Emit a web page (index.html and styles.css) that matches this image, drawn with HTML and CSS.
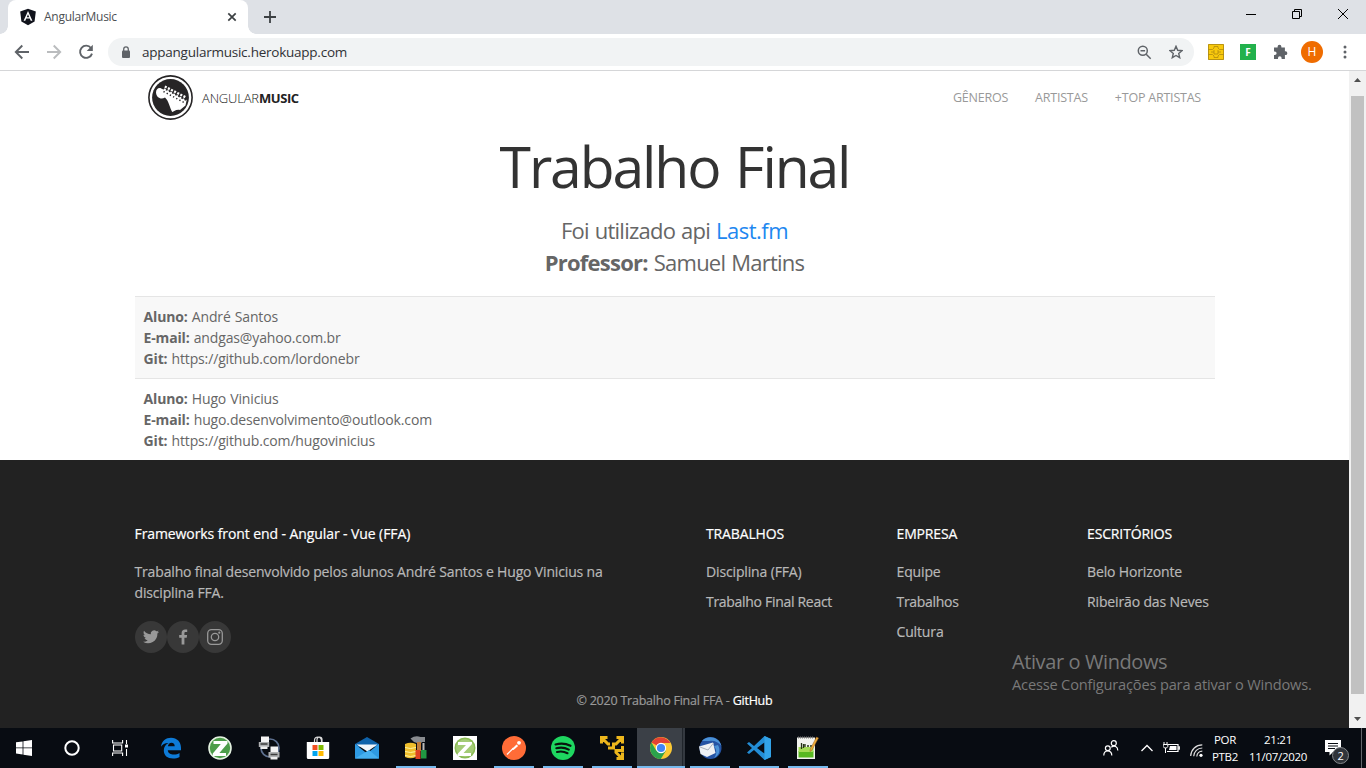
FILE: index.html
```html
<!DOCTYPE html>
<html lang="pt-BR">
<head>
<meta charset="utf-8">
<title>AngularMusic</title>
<link rel="stylesheet" href="styles.css">
</head>
<body>
<div class="screen">
  <div class="tabstrip">
    <div class="tab">
      <svg class="tab-icon" width="18" height="18" viewBox="0 0 18 18"><path d="M9 .8 16.8 3.5 15.6 13.6 9 17.2 2.4 13.6 1.2 3.5z" fill="#11131c"/><path d="M9 3 4.6 12.8h1.7l.9-2.2h3.6l.9 2.2h1.7zM9 6.2l1.2 3H7.8z" fill="#fff"/></svg>
      <span class="tab-title">AngularMusic</span>
      <svg class="tab-close" width="10" height="10" viewBox="0 0 10 10"><path d="M1.300 1.300l7.400 7.400M8.700 1.300l-7.400 7.400" stroke="#3c4043" stroke-width="1.700"/></svg>
    </div>
    <svg class="new-tab" width="12" height="12" viewBox="0 0 12 12"><path d="M6 0v12M0 6h12" stroke="#3c4043" stroke-width="1.800"/></svg>
    <div class="window-buttons">
      <svg width="10" height="10" viewBox="0 0 10 10"><path d="M0 5.500h10" stroke="#000"/></svg>
      <svg width="10" height="10" viewBox="0 0 10 10"><path d="M.5 2.500h7v7h-7zM2.500 2.500v-2h7v7h-2" fill="none" stroke="#000"/></svg>
      <svg width="10" height="10" viewBox="0 0 10 10"><path d="M0 0l10 10M10 0L0 10" stroke="#000"/></svg>
    </div>
  </div>

  <div class="toolbar">
    <div class="nav-buttons">
      <svg width="16" height="16" viewBox="0 0 16 16"><path d="M15 8H2M8.300 1.500 1.800 8l6.500 6.500" fill="none" stroke="#5f6368" stroke-width="1.900"/></svg>
      <svg width="16" height="16" viewBox="0 0 16 16"><path d="M1 8h13M7.700 1.500 14.200 8l-6.500 6.500" fill="none" stroke="#babcbe" stroke-width="1.900"/></svg>
      <svg width="16" height="16" viewBox="0 0 16 16"><path d="M13 4A6.100 6.100 0 1 0 14 9.600" fill="none" stroke="#5f6368" stroke-width="1.900"/><path d="M14.800 .8v6.100H8.700z" fill="#5f6368"/></svg>
    </div>
    <div class="omnibox">
      <svg width="10" height="13" viewBox="0 0 10 13"><rect x="1" y="4.500" width="8" height="7.500" rx="1" fill="#5f6368"/><path d="M2.700 5V3.200a2.300 2.300 0 0 1 4.600 0V5" fill="none" stroke="#5f6368" stroke-width="1.300"/></svg>
      <span class="url">appangularmusic.herokuapp.com</span>
      <svg class="zoom-icon" width="15" height="15" viewBox="0 0 15 15"><circle cx="5.800" cy="5.800" r="4.500" fill="none" stroke="#5f6368" stroke-width="1.500"/><path d="M3.500 5.800h4.600M9.200 9.200l4.500 4.500" stroke="#5f6368" stroke-width="1.500"/></svg>
      <svg width="14" height="14" viewBox="0 0 14 14"><path d="M7 1.300l1.700 4 4.300.4-3.300 2.800 1 4.200L7 10.500l-3.700 2.200 1-4.200L1 5.700l4.300-.4z" fill="none" stroke="#5f6368" stroke-width="1.400"/></svg>
    </div>
    <div class="extensions">
      <svg width="16" height="16" viewBox="0 0 16 16"><rect width="16" height="16" rx="1" fill="#f8c90c"/><path d="M.5.5h15v15H.5z" fill="none" stroke="#a98612" stroke-width=".8"/><path d="M0 5.500h4.500l1.500-1.500V2.500h4V4l1.500 1.500H16M0 10.500h4.500L6 12v1.500h4V12l1.500-1.500H16M6 6v4h4V6M3 8h3M10 8h3" fill="none" stroke="#b08c10" stroke-width=".8"/></svg>
      <span class="ext-f">F</span>
      <svg width="16" height="16" viewBox="0 0 16 16"><path d="M2 3.600h3.600v-.9a1.900 1.900 0 0 1 3.800 0v.9h3.500v3.700h.6a1.800 1.800 0 0 1 0 3.700h-.6v4H9.600v-.9a1.800 1.800 0 0 0-3.600 0v.9H2V11h.8a1.800 1.800 0 0 0 0-3.600H2z" fill="#5f6368"/></svg>
      <span class="avatar">H</span>
      <svg class="kebab" width="4" height="14" viewBox="0 0 4 14"><g fill="#5f6368"><circle cx="2" cy="2" r="1.500"/><circle cx="2" cy="7" r="1.500"/><circle cx="2" cy="12" r="1.500"/></g></svg>
    </div>
  </div>

  <div class="viewport">
    <div class="page">
      <nav class="navbar">
        <svg width="45" height="45" viewBox="0 0 45 45"><circle cx="22.500" cy="22.500" r="21.600" fill="#fff" stroke="#272526" stroke-width="1.600"/><circle cx="22.500" cy="22.500" r="18.400" fill="#272526"/><path d="M8 17.500C8 14 10.600 12.200 13.200 13.400 15.400 14.400 17 15.200 19 15.700L38.400 26.200 37.500 30.500 32 34.900C28 34 26 36.500 24.200 37 21.800 33 20.800 26 17 22.600 12.800 25 8.300 22.500 8 17.500z" fill="#fff"/><path d="M16 14.200 38.300 26" stroke="#fff" stroke-width="2" stroke-dasharray="1.800 1.700"/><path d="M16.800 11.500 38 22.500" stroke="#fff" stroke-width="2.400" stroke-dasharray="2.100 1.400"/><path d="M15.500 16.500 37 28" stroke="#272526" stroke-width="1.500" stroke-dasharray="1.300 2.300"/></svg>
        <span class="brand"><span class="brand-light">ANGULAR</span><b>MUSIC</b></span>
        <div class="menu"><a>GÊNEROS</a><a>ARTISTAS</a><a>+TOP ARTISTAS</a></div>
      </nav>
      <main class="container">
        <h1>Trabalho Final</h1>
        <p class="lead">Foi utilizado api <a>Last.fm</a><br><b>Professor:</b> Samuel Martins</p>
        <div class="student shaded"><b>Aluno:</b> André Santos<br><b>E-mail:</b> andgas@yahoo.com.br<br><b>Git:</b> https://github.com/lordonebr</div>
        <div class="student"><b>Aluno:</b> Hugo Vinicius<br><b>E-mail:</b> hugo.desenvolvimento@outlook.com<br><b>Git:</b> https://github.com/hugovinicius</div>
      </main>
      <footer class="footer">
        <div class="columns">
          <section>
            <h2 class="wide">Frameworks front end - Angular - Vue (FFA)</h2>
            <p class="about">Trabalho final desenvolvido pelos alunos André Santos e Hugo Vinicius na disciplina FFA.</p>
            <div class="social">
              <span><svg width="20" height="20" viewBox="0 0 20 20"><path d="M18 4.800c-.6.300-1.200.4-1.900.5.700-.4 1.200-1 1.400-1.800-.6.400-1.300.6-2.100.8A3.300 3.300 0 0 0 9.800 7.300C7.100 7.200 4.600 5.900 3 3.800c-.9 1.500-.4 3.400 1 4.400-.5 0-1-.2-1.500-.4 0 1.600 1.100 2.900 2.600 3.200-.5.100-1 .2-1.500.1.400 1.300 1.600 2.200 3.100 2.300A6.600 6.600 0 0 1 2 14.700a9.300 9.300 0 0 0 14.400-8.200c.6-.5 1.200-1.100 1.600-1.700z"/></svg></span>
              <span><svg width="20" height="20" viewBox="0 0 20 20"><path d="M8.600 17.500V10.700H6.200V8h2.400V6c0-2.300 1.400-3.600 3.500-3.600 1 0 1.900.1 2.100.1V5h-1.400c-1.100 0-1.400.5-1.400 1.300V8h2.700l-.4 2.700h-2.300v6.800z"/></svg></span>
              <span><svg width="20" height="20" viewBox="0 0 20 20"><rect x="2.700" y="2.700" width="14.600" height="14.600" rx="3.800" fill="none" stroke="#999" stroke-width="1.300"/><circle cx="10" cy="10" r="3.700" fill="none" stroke="#999" stroke-width="1.300"/><circle cx="14.300" cy="5.700" r="1.100"/></svg></span>
            </div>
          </section>
          <section><h2>TRABALHOS</h2><a class="link">Disciplina (FFA)</a><a class="link tight">Trabalho Final React</a></section>
          <section><h2>EMPRESA</h2><a class="link">Equipe</a><a class="link tight">Trabalhos</a><a class="link">Cultura</a></section>
          <section><h2>ESCRITÓRIOS</h2><a class="link">Belo Horizonte</a><a class="link">Ribeirão das Neves</a></section>
        </div>
        <p class="copyright">© 2020 Trabalho Final FFA - <a>GitHub</a></p>
      </footer>
    </div>
    <div class="scrollbar">
      <svg width="17" height="17" viewBox="0 0 17 17"><path d="M5 11h7L8.500 7z" fill="#505050"/></svg>
      <div class="thumb"></div>
      <svg class="down" width="17" height="17" viewBox="0 0 17 17"><path d="M5 6h7L8.500 10z" fill="#505050"/></svg>
    </div>
  </div>

  <div class="taskbar">
    <div class="system">
      <span><svg width="16" height="16" viewBox="0 0 16 16"><path d="M0 2.300 6.600 1.400v6.100H0zM7.400 1.300 16 0v7.500H7.400zM0 8.300h6.600v6.200L0 13.600zM7.400 8.300H16V16l-8.600-1.300z" fill="#fff"/></svg></span>
      <span><svg width="16" height="16" viewBox="0 0 16 16"><circle cx="8" cy="8" r="6.700" fill="none" stroke="#fff" stroke-width="2"/></svg></span>
      <span><svg width="17" height="16" viewBox="0 0 17 16"><path d="M.6 0v3h10V0M.6 16v-3h10v3M1.500 5h8.200v6H1.500zM14.500 0v4M14.500 9v7" fill="none" stroke="#fff" stroke-width="1.100"/><path d="M13 4.500h3v3h-3z" fill="#fff"/></svg></span>
    </div>
    <div class="apps">
      <span><svg width="22" height="22" viewBox="0 0 22 22"><path d="M1 9.800C1.700 3.700 6 .8 11 .8c6 0 10 4.200 10 10v2.500H7.800c.2 3 3 4.300 6 4.300 2.300 0 4.200-.7 5.700-1.600V20c-1.900 1-4.200 1.600-6.500 1.600-5.500 0-9.200-3-9.200-8 0-3.400 1.800-6 4.800-7.500C4.800 6 2.500 7.700 1 9.800zM7.900 9.300h6.800c0-2.400-1.100-3.600-3.200-3.600-2 0-3.300 1.500-3.600 3.600z" fill="#0e7bd7"/></svg></span>
      <span><svg width="24" height="24" viewBox="0 0 24 24"><circle cx="12" cy="12" r="11" fill="#4c9d49" stroke="#e4f2e1" stroke-width="1.600"/><path d="M5.500 5h14v2.500L11.400 17H18v3H4.800v-2.500l8-9.500H5.500z" fill="#fff"/></svg></span>
      <span><svg width="22" height="24" viewBox="0 0 22 24"><circle cx="12" cy="12" r="9" fill="none" stroke="#5e7190" stroke-width="1.700"/><path d="M3 .5h8v6H3zM12.500 10.500H20v6h-7.500z" fill="#f4f4f4"/><path d="M.8 6h10.400v5H.8zM10.500 16h11v5.500h-11z" fill="#aeb0b2"/><path d="M2.500 8h7M12.500 18.400h7" stroke="#3c3c3c" stroke-width="1.500"/><path d="M2.500 10.500h7v2.500h-7zM12.500 21h7v2.500h-7z" fill="#eee"/></svg></span>
      <span><svg width="24" height="24" viewBox="0 0 24 24"><path d="M8.500 7V4.500a3.500 3.500 0 0 1 7 0V7M11 6V3.500a2.500 2.500 0 0 1 5 0V6" fill="none" stroke="#ddd" stroke-width="1.200"/><path d="M.8 6h22.400v15.500a1.500 1.500 0 0 1-1.500 1.500H2.300A1.500 1.500 0 0 1 .8 21.500z" fill="#fff"/><path d="M6.500 9h5v5h-5z" fill="#f25022"/><path d="M12.500 9h5v5h-5z" fill="#7fba00"/><path d="M6.500 15h5v5h-5z" fill="#00a4ef"/><path d="M12.500 15h5v5h-5z" fill="#ffb900"/></svg></span>
      <span><svg width="24" height="24" viewBox="0 0 24 24"><path d="M0 8 12 1l12 7v3H0z" fill="#0f63aa"/><path d="M0 8l12 9.500L24 8v14.500H0z" fill="#2e9ae2"/><path d="M1.500 8.500h21L12.500 15.500z" fill="#f1f6fa"/><path d="M0 22.500 14 14l10 8.500z" fill="#46b0f0"/></svg></span>
      <span class="open"><svg width="22" height="24" viewBox="0 0 22 24"><path d="M0 8q5.500-2.500 11 0v13q-5.500 2.500-11 0z" fill="#eebe2c"/><path d="M0 11.500q5.500 2 11 0M0 15.500q5.500 2 11 0M0 19.500q5.500 2 11 0" fill="none" stroke="#fff3a0"/><path d="M5.500 2.500q5-3.500 10-1.500H20v5h-3l-1 1.300-4-.4L9 6z" fill="#888b8f"/><path d="M12 6h4v9h-4z" fill="#bf7c3b"/><path d="M10.500 14h5v9h-5z" fill="#df4323"/><path d="M17.500 7h2v8h-2z" fill="#bbb"/><path d="M16 14h5.500v8.500H16z" fill="#209742"/></svg></span>
      <span><svg width="24" height="24" viewBox="0 0 24 24"><path d="M0 0h24v24H0z" fill="#fff"/><circle cx="12" cy="12" r="10.500" fill="#8aba54"/><circle cx="12" cy="12" r="9" fill="#a4cc76"/><path d="M5 6h14v2l-8.500 9H18v3H4.500v-2L13 9H5z" fill="#fff"/></svg></span>
      <span class="open"><svg width="24" height="24" viewBox="0 0 24 24"><circle cx="12" cy="12" r="12" fill="#ff6c37"/><path d="M5 18.500 11.500 12" stroke="#fff" stroke-width="1.200" fill="none"/><path d="M9.500 13.500l5-5 1.700 1.600-4.700 3.900z" fill="#fff"/><circle cx="17" cy="6.800" r="1.900" fill="#fff"/></svg></span>
      <span class="open"><svg width="24" height="24" viewBox="0 0 24 24"><circle cx="12" cy="12" r="12" fill="#1ed760"/><path d="M4.500 8.500c5-1.500 10.500-1 15 1.300M5.300 12.300c4.300-1.200 8.800-.7 12.500 1.300M6 16c3.700-.9 7.300-.5 10.500 1.200" fill="none" stroke="#08150d" stroke-width="2.100" stroke-linecap="round"/></svg></span>
      <span class="open"><svg width="24" height="24" viewBox="0 0 24 24"><g fill="none" stroke="#edb71c" stroke-width="3"><path d="M1.500 7.500v-6h6M2 2l6 6h2M16.500 1.500h6v6M22 2l-6 6h-2.500v4H8M22.500 10v4.500H16v2l6 6M16.500 22.500h6v-6"/></g></svg></span>
      <span class="open active"><svg width="22" height="22" viewBox="0 0 22 22"><circle cx="11" cy="11" r="11" fill="#fcc934"/><path d="M11 11 1.500 5.500A11 11 0 0 1 20.500 6H11z" fill="#e34133"/><path d="M1.500 5.500A11 11 0 0 0 10.800 22l5-8.200L11 11 6.300 13.700z" fill="#2ba24c"/><circle cx="11" cy="11" r="5.200" fill="#fff"/><circle cx="11" cy="11" r="4.100" fill="#4285f4"/></svg></span>
      <span class="open"><svg width="24" height="24" viewBox="0 0 24 24"><circle cx="12.500" cy="12" r="11" fill="#2453a3"/><path d="M4 5C9-1 21 0 23.500 10c-3-4-8-6-12-5z" fill="#4a91d6"/><path d="M20 9c3 5 1 11-4 13 3-4 3-8 0-12z" fill="#4a91d6"/><path d="M1 10.500 15 6.500l2.500 10.500L9 21l-6.500-3z" fill="#eef1f4"/><path d="M2 11l8 3 5.500-7" fill="none" stroke="#a6b0bb"/></svg></span>
      <span class="open"><svg width="24" height="24" viewBox="0 0 24 24"><path d="M17.500 0 24 3v18l-6.500 3L7 14l-5 4-2-1.500L5 12 0 7.500 2 6l5 4zM17.500 6.500 10 12l7.500 5.500z" fill="#238dd5" fill-rule="evenodd"/><path d="M17.500 0 24 3v18l-6.500 3z" fill="#32a3e8"/></svg></span>
      <span class="open"><svg width="23" height="24" viewBox="0 0 23 24"><path d="M1 1.500h18V23H1z" fill="#f2f3ee"/><path d="M2.500 15h15v6.500h-15z" fill="#58b921"/><path d="M2.500 11h15v5h-15z" fill="#a4dc55"/><path d="M2 1.500h16" stroke="#777" stroke-width="2" stroke-dasharray="1 1"/><path d="M5.500 7v6M7.500 8v4M9 8v3M11 10h2M14 10h2" stroke="#263616" stroke-width="1.300"/><path d="M20.500 1 22.500 2 16 14l-2 1.500.3-2.500z" fill="#efad3a" stroke="#986022" stroke-width=".5"/></svg></span>
    </div>
    <div class="tray">
      <svg class="people" width="16" height="16" viewBox="0 0 16 16"><g fill="none" stroke="#fff" stroke-width="1.200"><circle cx="4.800" cy="8.300" r="2.400"/><path d="M.8 15.500c0-6 8-6 8 0"/><circle cx="10.800" cy="3.200" r="2.500"/><path d="M8.300 7.300c3-2.700 6.500-.5 6.500 3.200"/></g></svg>
      <svg class="chevron" width="12" height="8" viewBox="0 0 12 8"><path d="M.5 7 6 1.500 11.500 7" fill="none" stroke="#fff" stroke-width="1.300"/></svg>
      <svg class="battery" width="17" height="12" viewBox="0 0 17 12"><path d="M5 2.500h10v7H4M16.300 4.300v3.400" fill="none" stroke="#fff" stroke-width="1.200"/><path d="M7 4h6.500v4H6z" fill="#fff"/><path d="M1 0v2M4 0v2M.2 2.500h4.600v2L3.500 6h-2L.2 4.500zM2.500 6v5" stroke="#fff" stroke-width="1" fill="none"/></svg>
      <svg class="wifi" width="13" height="13" viewBox="0 0 13 13"><g fill="none" stroke="#ddd" stroke-width="1.200"><path d="M.7 12C1 5.500 6 .8 12.300.8M3.700 12.300C4 7.500 7.500 4 12.300 4M6.800 12.500C7 9.500 9.200 7.200 12.300 7.200"/></g><circle cx="11" cy="11.300" r="1.600" fill="#fff"/></svg>
      <div class="lang">POR<br>PTB2</div>
      <div class="clock">21:21<br>11/07/2020</div>
      <div class="notice"><svg width="16" height="16" viewBox="0 0 16 16"><path d="M0 0h16v12H8l-3.500 3.500V12H0z" fill="#fff"/><path d="M3 3.500h10M3 6h10M3 8.500h7" stroke="#080c12" stroke-width="1"/></svg><span class="count">2</span></div>
    </div>
  </div>
  <div class="watermark"><div class="wm-title">Ativar o Windows</div><div class="wm-text">Acesse Configurações para ativar o Windows.</div></div>
</div>
</body>
</html>
```
FILE: styles.css
```css
* { box-sizing: border-box; }
body, h1, h2, p { margin: 0; }
body { font-family: "Open Sans", "Noto Sans", sans-serif; overflow: hidden; }
svg { display: block; flex: none; }
.screen { position: relative; display: flex; flex-direction: column; width: 1366px; height: 768px; background: #fff; }

/* browser chrome */
.tabstrip { display: flex; height: 34px; background: #dee1e6; }
.tab { position: relative; display: flex; align-items: center; width: 240px; height: 34px; margin-left: 8px; padding: 0 11px; background: #fff; border-radius: 8px 8px 0 0; }
.tab::before, .tab::after { content: ""; position: absolute; bottom: 0; width: 8px; height: 8px; }
.tab::before { left: -8px; background: radial-gradient(circle at 0 0, transparent 7.5px, #fff 8px); }
.tab::after { right: -8px; background: radial-gradient(circle at 100% 0, transparent 7.5px, #fff 8px); }
.tab-title { margin: -1px 0 0 7px; font-size: 12px; letter-spacing: -.27px; color: #4c5054; }
.tab-close { margin-left: auto; }
.new-tab { margin: 11px 0 0 16px; }
.window-buttons { display: flex; gap: 36px; margin: 9px 18px 0 auto; }

.toolbar { display: flex; align-items: center; height: 37px; padding-left: 14px; border-bottom: 1px solid #d5d6d8; }
.nav-buttons { display: flex; gap: 16px; }
.omnibox { display: flex; align-items: center; width: 1086px; height: 28px; margin-left: 14px; padding: 0 11px 0 13px; border-radius: 14px; background: #f1f3f4; }
.url { margin: -1px auto 0 11px; font-size: 13.5px; letter-spacing: -.24px; color: #303134; }
.zoom-icon { margin-right: 17px; }
.extensions { display: flex; align-items: center; margin-left: 14px; }
.ext-f { width: 16px; height: 16px; margin: 0 16px; background: #22b14c; color: #fff; font: 700 10px/16px "Open Sans", sans-serif; text-align: center; }
.avatar { width: 22px; height: 22px; margin: 0 20px 0 13px; border-radius: 50%; background: #ef6c00; color: #fff; font-size: 12px; line-height: 22px; text-align: center; }

/* page */
.viewport { display: flex; height: 657px; }
.page { width: 1349px; color: #666; }
.navbar { display: flex; align-items: center; height: 54px; padding: 0 148px 1px; }
.brand { display: flex; margin-left: 9px; font-size: 13px; letter-spacing: -.18px; color: #222; }
.brand-light { font-weight: 300; }
.brand b { letter-spacing: -.4px; }
.menu { display: flex; gap: 27px; margin-left: auto; font-size: 12.5px; letter-spacing: -.22px; color: #999; }
.container { width: 1080px; margin: 0 auto; }
h1 { height: 90px; padding-top: 5px; font-size: 57px; line-height: 72px; font-weight: 400; letter-spacing: -2.1px; word-spacing: 3px; text-align: center; color: #333; }
.lead { height: 81px; margin-top: -1px; margin-bottom: 1px; font-size: 22px; line-height: 32px; letter-spacing: -.76px; word-spacing: 1px; text-align: center; }
.lead a { color: #1e87f0; letter-spacing: -.5px; }
.student { height: 82px; padding: 9px 9px; border-top: 1px solid #e5e5e5; font-size: 14px; line-height: 21px; letter-spacing: -.14px; word-spacing: .6px; }
.shaded { background: #f8f8f8; }

.footer { height: 268px; padding: 63px 134.5px 0; background: #222; color: #b8b8b8; font-size: 14px; line-height: 21px; }
.columns { display: grid; grid-template-columns: 571.5px 190.5px 190.5px 1fr; height: 167px; white-space: nowrap; -webkit-text-stroke: .2px currentColor; }
h2 { margin-bottom: 17px; font-size: 14px; line-height: 21px; font-weight: 400; letter-spacing: -.14px; color: #fff; }
.wide { letter-spacing: -.09px; }
.about { width: 500px; white-space: normal; letter-spacing: -.16px; }
.social { display: flex; margin-top: 18px; }
.social span { width: 32px; height: 32px; padding: 6px; border-radius: 50%; background: #383838; fill: #999; }
.link { display: block; margin-bottom: 9px; letter-spacing: -.14px; }
.tight { letter-spacing: -.3px; }
.copyright { font-size: 12.5px; letter-spacing: -.23px; text-align: center; color: #999; -webkit-text-stroke: .2px currentColor; }
.copyright a { color: #fff; }

.scrollbar { display: flex; flex-direction: column; width: 17px; background: #f1f1f1; }
.thumb { width: 13px; height: 598px; margin: 8px 0 0 2px; background: #c1c1c1; }
.down { margin-top: auto; }

/* taskbar */
.taskbar { display: flex; height: 40px; background: #080c12; color: #fff; }
.system { display: flex; width: 147px; }
.system span { display: grid; place-items: center; width: 48px; }
.apps { display: flex; }
.apps span { display: grid; place-items: center; width: 48.96px; }
.open { background: linear-gradient(#76b9ed, #76b9ed) center bottom / 40px 2px no-repeat; }
.apps .active { background: linear-gradient(#76b9ed, #76b9ed) center bottom / 48px 2px no-repeat, linear-gradient(90deg, #3b4047 45px, #20252b 45px, #20252b 46px, #343940 46px); }
.tray { display: flex; align-items: center; margin-left: auto; padding-right: 4px; height: 40px; font-size: 11.5px; line-height: 17px; letter-spacing: -.3px; text-align: center; }
.chevron { margin-left: 22px; }
.battery { margin-left: 10px; }
.wifi { margin: 4px 0 0 10px; }
.lang { width: 36px; margin-left: 4px; }
.clock { width: 60px; margin-left: 5px; }
.notice { position: relative; height: 40px; width: 37px; margin-left: 17px; padding-top: 12px; border-right: 1px solid #62666b; }
.count { position: absolute; left: 7px; top: 19px; width: 17px; height: 17px; border: 1px solid #85888b; border-radius: 50%; background: #30343a; font-size: 11px; line-height: 15px; }
.watermark { position: absolute; left: 1012px; top: 649px; color: #797979; white-space: nowrap; }
.wm-title { font-size: 20px; line-height: 26px; letter-spacing: -.4px; }
.wm-text { margin-top: -1px; font-size: 14.6px; line-height: 20px; letter-spacing: -.17px; }
```
